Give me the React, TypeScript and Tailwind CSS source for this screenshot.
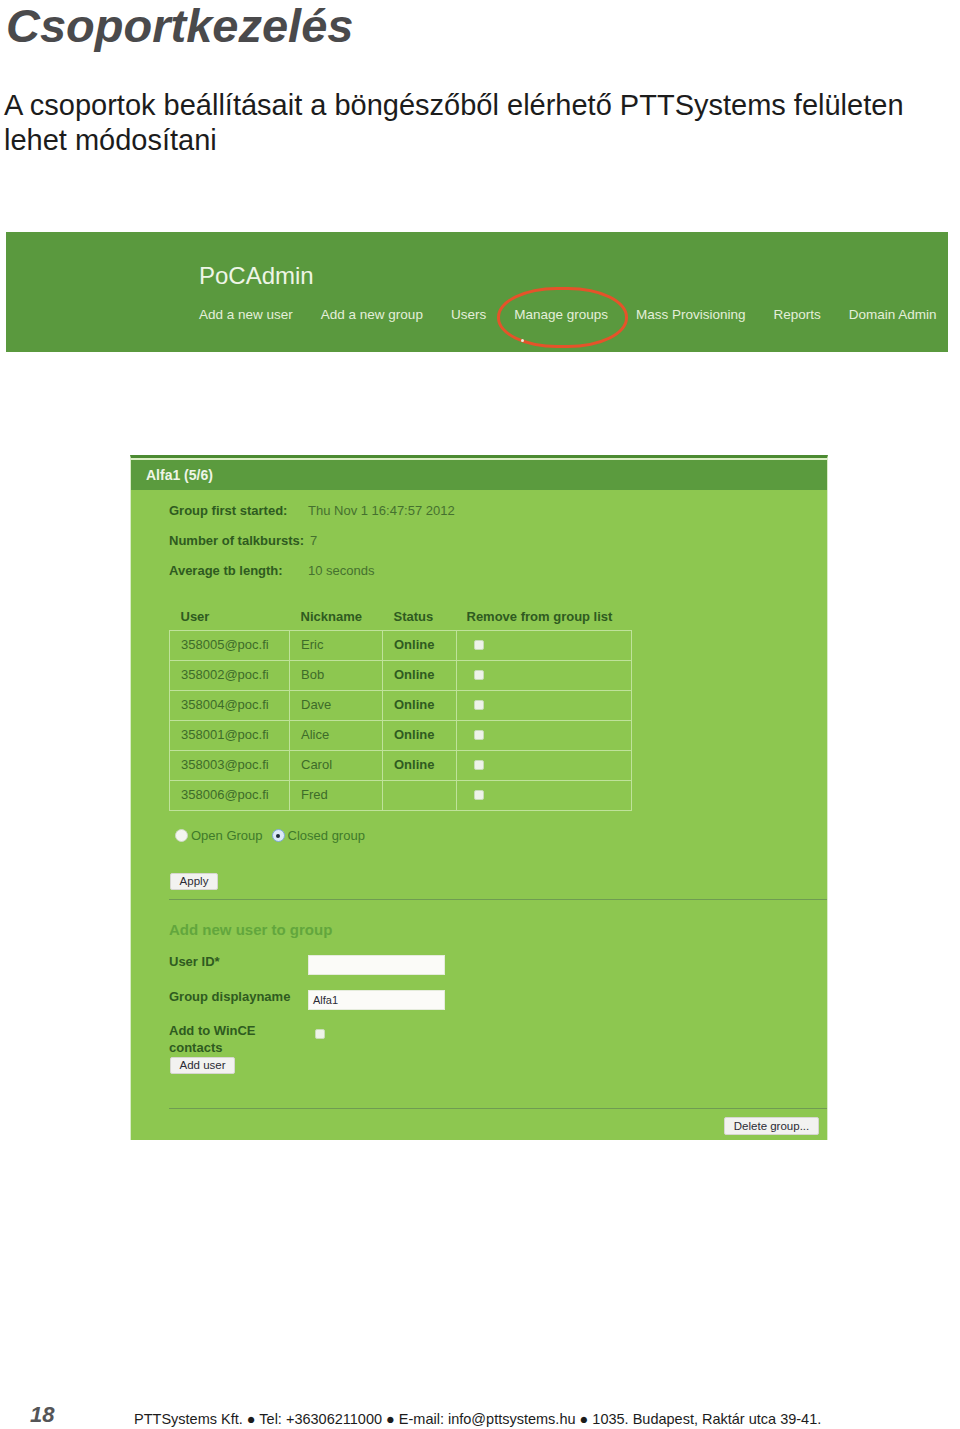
import React from "react";

const navItems = [
  "Add a new user",
  "Add a new group",
  "Users",
  "Manage groups",
  "Mass Provisioning",
  "Reports",
  "Domain Admin",
];

const members = [
  { user: "358005@poc.fi", nick: "Eric", status: "Online" },
  { user: "358002@poc.fi", nick: "Bob", status: "Online" },
  { user: "358004@poc.fi", nick: "Dave", status: "Online" },
  { user: "358001@poc.fi", nick: "Alice", status: "Online" },
  { user: "358003@poc.fi", nick: "Carol", status: "Online" },
  { user: "358006@poc.fi", nick: "Fred", status: "" },
];

function Checkbox() {
  return <div className="w-[10px] h-[10px] rounded-[2px] bg-[#eef3e8] border border-[#c9dcb8]" />;
}

function SmallButton({ label, className }: { label: string; className?: string }) {
  return (
    <div
      className={
        "h-[17px] flex items-center justify-center rounded-[2px] bg-[#f2f2f0] border border-[#d6d6d0] text-[11.5px] leading-[14px] text-[#2b2b35] " +
        (className || "")
      }
    >
      {label}
    </div>
  );
}

function Radio({ checked }: { checked?: boolean }) {
  return checked ? (
    <div className="w-[13px] h-[13px] rounded-full bg-[#dbe9f7] border border-[#7fa8d6] flex items-center justify-center">
      <div className="w-[4px] h-[4px] rounded-full bg-[#1d2b3a]" />
    </div>
  ) : (
    <div className="w-[13px] h-[13px] rounded-full bg-[#f4f6f0] border border-[#cfd8c6]" />
  );
}

export default function App() {
  return (
    <div className="w-[960px] h-[1429px] bg-white flex flex-col font-['Liberation_Sans',Arial,sans-serif]">
      <h1 className="ml-[6px] text-[47px] leading-[52px] font-bold italic text-[#4a4a4c]">Csoportkezelés</h1>
      <p className="ml-[4px] mt-[36px] text-[29px] leading-[35px] text-[#1c1c1c]">
        A csoportok beállításait a böngészőből elérhető PTTSystems felületen lehet módosítani
      </p>

      {/* admin banner */}
      <div className="relative ml-[6px] mt-[74px] w-[942px] h-[120px] bg-[#5a993e] pl-[193px] pt-[30px]">
        <div className="text-[24px] leading-[28px] text-[#eef5e6]">PoCAdmin</div>
        <div className="mt-[17px] flex gap-[28px] text-[13.5px] leading-[16px] text-[#e4efda]">
          {navItems.map((n) => (
            <span key={n}>{n}</span>
          ))}
        </div>
        <div className="absolute left-[491px] top-[55px] w-[131px] h-[61px] rounded-[60px/30px] border-[3px] border-[#e5532a]" />
        <div className="absolute left-[515px] top-[107px] w-[3px] h-[3px] rounded-full bg-[#e8f0e0]" />
      </div>

      {/* group panel */}
      <div className="ml-[130px] mt-[103px] w-[698px] bg-[#8dc750] border-t-[3px] border-[#4b8a31] border-x border-x-[#d9ecc6]">
        <div className="h-[2px] bg-[#dcefc6]" />
        <div className="h-[30px] bg-[#5b9b3e] flex items-center pl-[15px] text-[14px] font-bold text-[#eef5e6]">
          Alfa1 (5/6)
        </div>

        <div className="pl-[38px] pb-[5px]">
          <div className="pt-[6px] text-[13px] leading-[30px] text-[#2f5b20]">
            <div className="flex">
              <span className="w-[139px] font-bold">Group first started:</span>
              <span className="text-[#45712f]">Thu Nov 1 16:47:57 2012</span>
            </div>
            <div className="flex">
              <span className="font-bold">Number of talkbursts:</span>
              <span className="ml-[6px] text-[#45712f]">7</span>
            </div>
            <div className="flex">
              <span className="w-[139px] font-bold">Average tb length:</span>
              <span className="text-[#45712f]">10 seconds</span>
            </div>
          </div>

          <table className="mt-[18px] w-[463px] table-fixed border-collapse text-[13px] text-[#3d6c29]">
            <thead>
              <tr className="h-[26px] text-left text-[#2f5b20]">
                <th className="w-[120px] pl-[11px] font-bold">User</th>
                <th className="w-[93px] pl-[11px] font-bold">Nickname</th>
                <th className="w-[74px] pl-[11px] font-bold">Status</th>
                <th className="pl-[10px] font-bold whitespace-nowrap">Remove from group list</th>
              </tr>
            </thead>
            <tbody>
              {members.map((m) => (
                <tr key={m.user} className="h-[30px]">
                  <td className="border border-[#bfe29a] pl-[11px]">{m.user}</td>
                  <td className="border border-[#bfe29a] pl-[11px]">{m.nick}</td>
                  <td className="border border-[#bfe29a] pl-[11px] font-bold text-[#2f5b20]">{m.status}</td>
                  <td className="border border-[#bfe29a] pl-[17px]">
                    <Checkbox />
                  </td>
                </tr>
              ))}
            </tbody>
          </table>

          <div className="mt-[17px] ml-[6px] h-[16px] flex items-center text-[13px] text-[#3f7a2a]">
            <Radio />
            <span className="ml-[3px]">Open Group</span>
            <span className="ml-[9px]">
              <Radio checked />
            </span>
            <span className="ml-[3px]">Closed group</span>
          </div>

          <SmallButton label="Apply" className="mt-[29px] ml-[1px] w-[48px]" />

          <div className="mt-[9px] h-px bg-[#6f9c52]" />

          <div className="mt-[21px] text-[15px] leading-[18px] font-bold text-[#62a63d]">Add new user to group</div>

          <div className="mt-[16px] flex items-start text-[13px] leading-[16px] font-bold text-[#2f5b20]">
            <span className="w-[139px] -mt-px">User ID*</span>
            <div className="w-[137px] h-[20px] bg-[#fbfbf8] border border-[#e5ecdc]" />
          </div>
          <div className="mt-[15px] flex items-start text-[13px] leading-[16px] font-bold text-[#2f5b20]">
            <span className="w-[139px] -mt-px">Group displayname</span>
            <div className="w-[137px] h-[20px] bg-[#fbfbf8] border border-[#e5ecdc] pl-[4px] flex items-center text-[11px] font-normal text-[#2b2b35]">
              Alfa1
            </div>
          </div>
          <div className="mt-[12px] flex items-start text-[13px] leading-[17px] font-bold text-[#2f5b20]">
            <span className="w-[139px]">
              Add to WinCE
              <br />
              contacts
            </span>
            <div className="ml-[7px] mt-[7px]">
              <Checkbox />
            </div>
          </div>
          <SmallButton label="Add user" className="mt-[1px] ml-[1px] w-[65px]" />

          <div className="mt-[34px] h-px bg-[#6f9c52]" />

          <div className="mt-[8px] flex justify-end pr-[8px]">
            <SmallButton label="Delete group..." className="w-[95px] h-[18px]" />
          </div>
        </div>
      </div>

      <div className="mt-auto pb-[2px] pl-[30px] flex items-end">
        <span className="w-[104px] text-[22px] leading-[24px] font-bold italic text-[#555557]">18</span>
        <span className="text-[14.5px] leading-[16px] text-[#1c1c1c]">
          PTTSystems Kft. ● Tel: +36306211000 ● E-mail: info@pttsystems.hu ● 1035. Budapest, Raktár utca 39-41.
        </span>
      </div>
    </div>
  );
}
